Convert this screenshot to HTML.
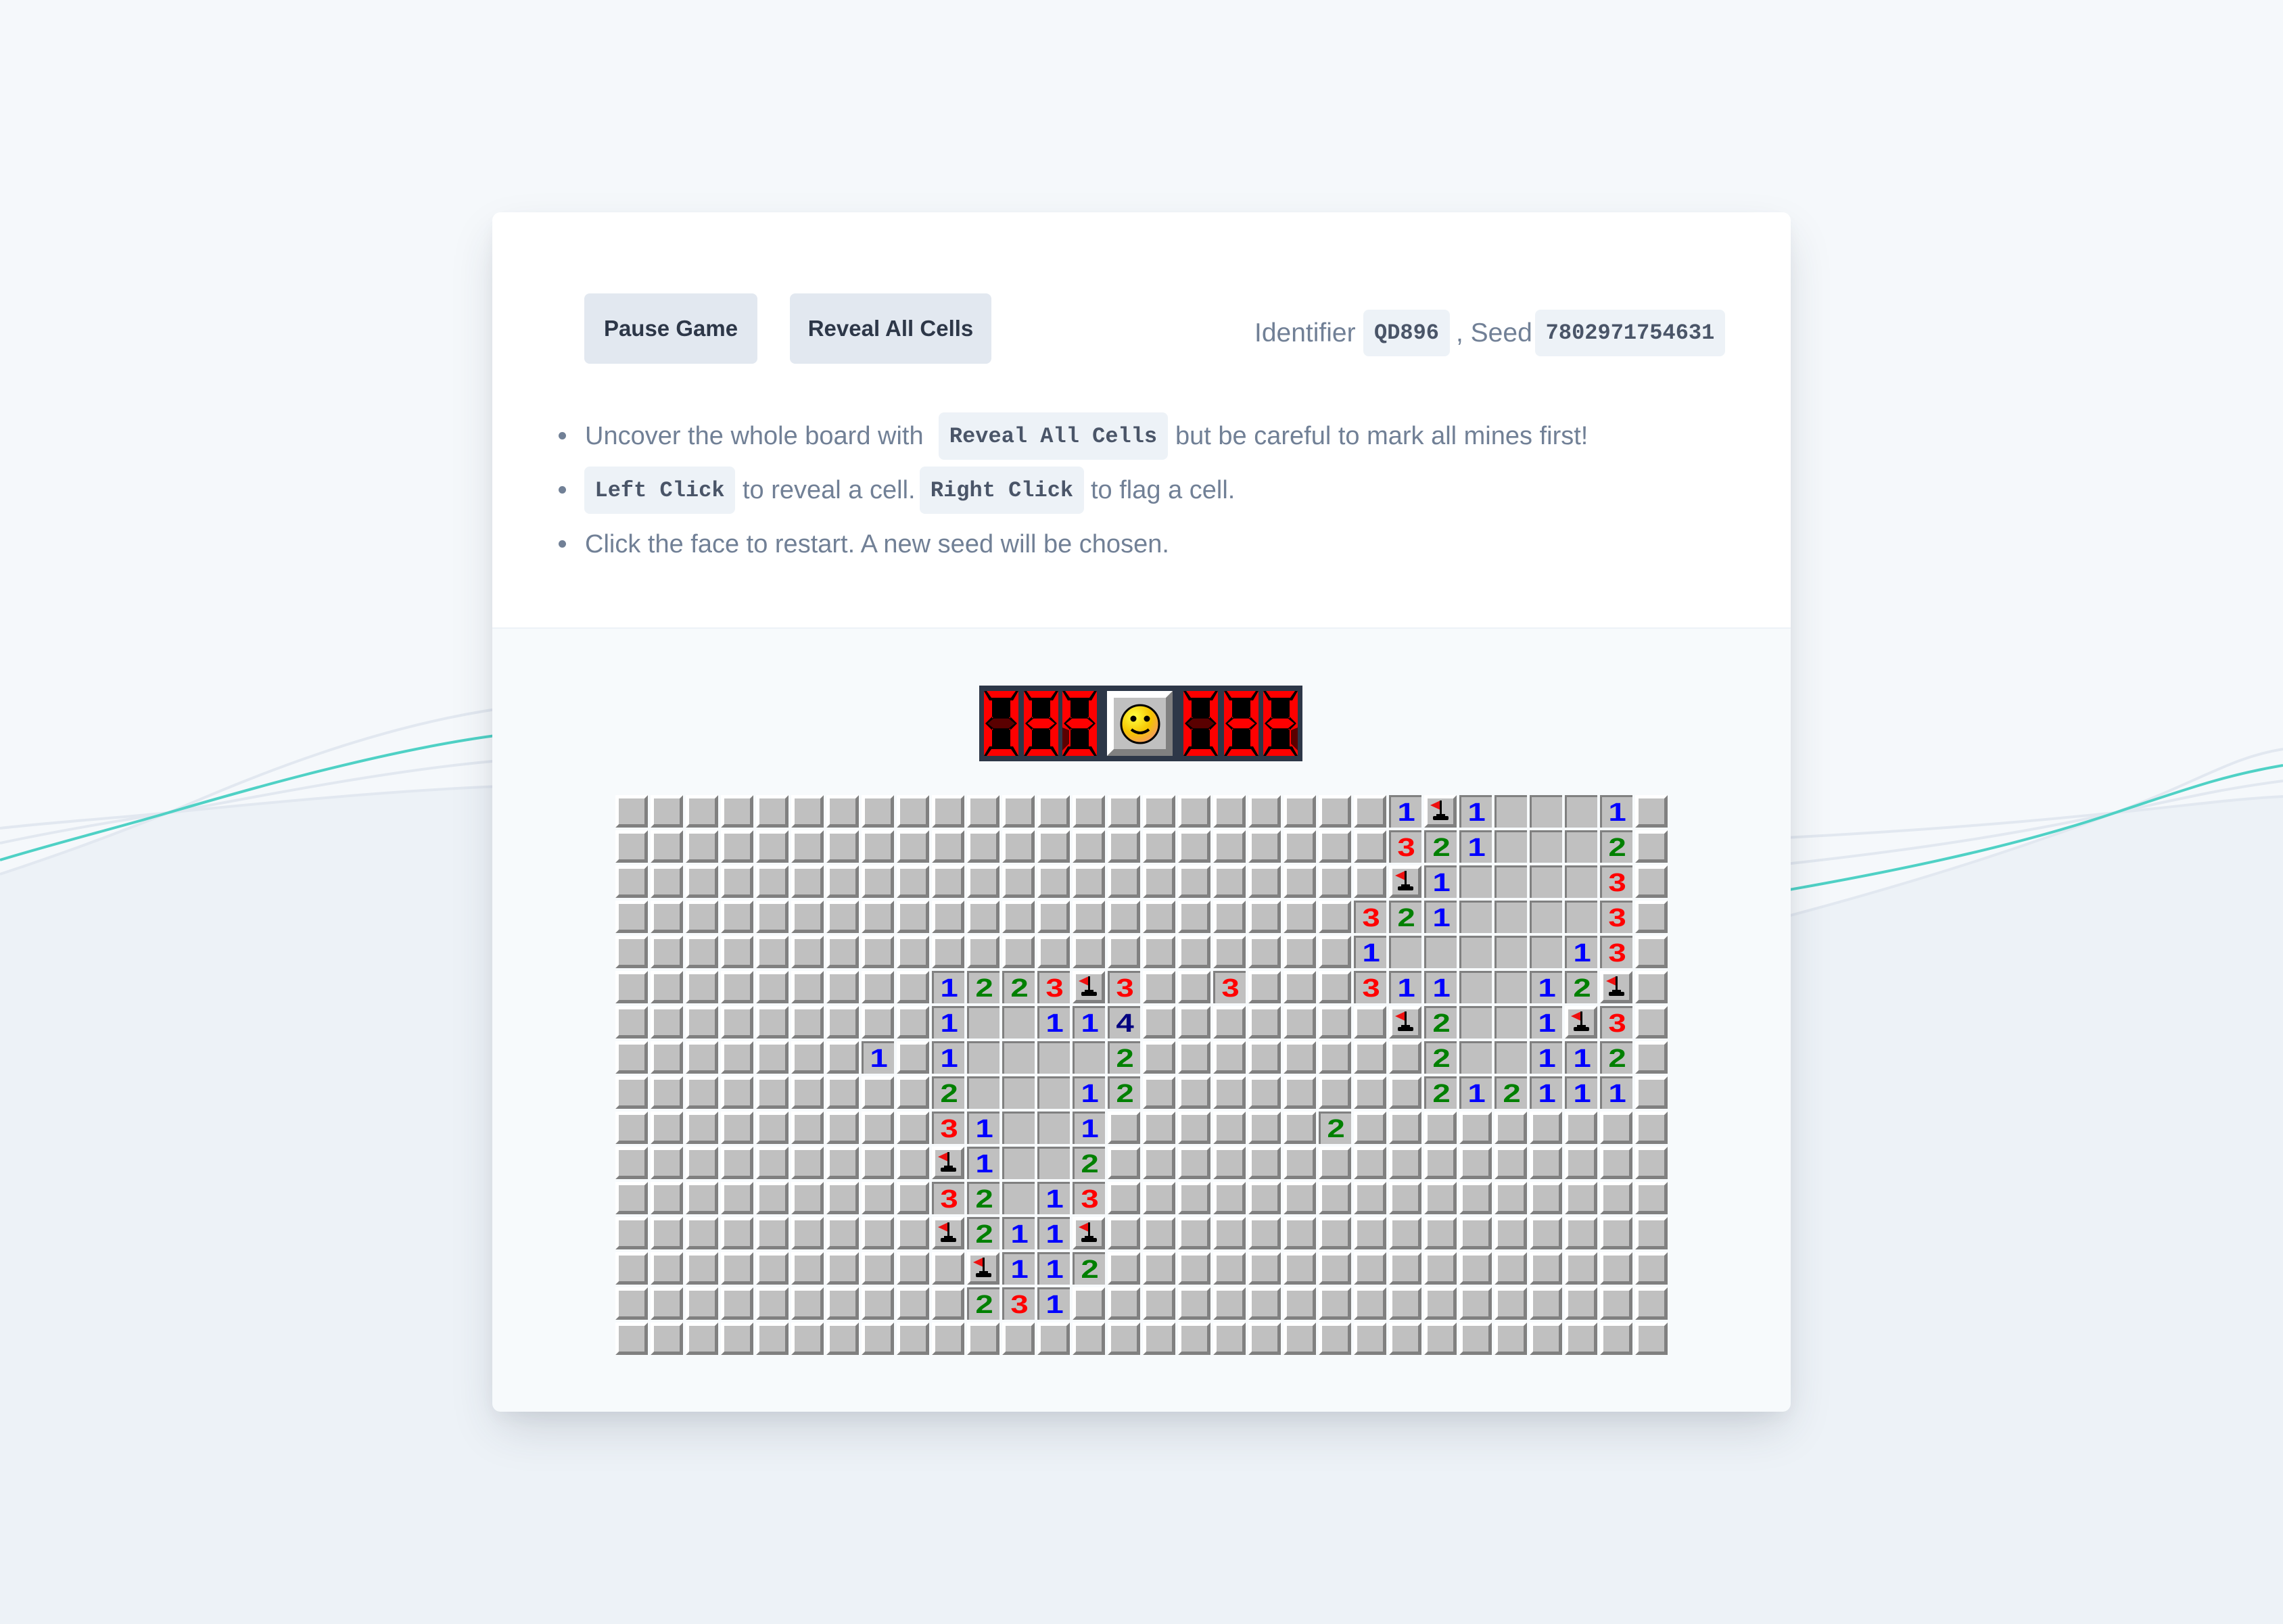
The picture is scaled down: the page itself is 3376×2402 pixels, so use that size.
<!DOCTYPE html>
<html><head><meta charset="utf-8"><style>
*{box-sizing:border-box}
body{margin:0;width:3376px;height:2402px;position:relative;overflow:hidden;background:#f5f8fb;font-family:"Liberation Sans",sans-serif}
#bg{position:absolute;left:0;top:0}
.card{position:absolute;left:728px;top:314px;width:1920px;height:1774px;background:#f7fafc;border-radius:12px;box-shadow:0 30px 70px -10px rgba(45,55,72,.18),0 10px 25px -5px rgba(45,55,72,.06);overflow:hidden}
.head{position:absolute;left:0;top:0;width:1920px;height:616px;background:#fff;border-bottom:2px solid #edf2f7}
.btn{position:absolute;top:120px;height:104px;background:#e2e8f0;border-radius:8px;color:#2d3748;font-weight:bold;font-size:33px;display:flex;align-items:center;justify-content:center}
.code{position:absolute;background:#edf2f7;border-radius:8px;font-family:"Liberation Mono",monospace;font-weight:bold;font-size:32px;color:#4a5568;display:flex;align-items:center;justify-content:center}
.t{position:absolute;color:#718096;font-size:38px;white-space:nowrap;line-height:1}
.dot{position:absolute;width:11px;height:11px;border-radius:50%;background:#718096}
#grid{position:absolute;left:910px;top:1176px;width:1560px;height:832px}
.r{position:absolute;width:48px;height:48px;background:#c0c0c0;border-top:3px solid #808080;border-left:3px solid #808080;text-align:center;font-weight:900;font-size:38px;line-height:46px}
.r span{display:inline-block;transform:scaleX(1.25)}
.n1{color:#0000ff}.n2{color:#008000}.n3{color:#ff0000}.n4{color:#000080}
</style></head><body>
<svg id="bg" width="3376" height="2402">
<rect x="730" y="1200" width="1916" height="1202" fill="#edf2f7"/>
<path d="M0,1293 C100,1260 180,1230 249,1202 C420,1185 600,1168 740,1163 L740,2402 L0,2402Z" fill="#edf2f7"/>
<path d="M0,1293 C100,1260 180,1230 249,1202 S520,1080 740,1048" fill="none" stroke="#e2e8f0" stroke-width="4"/>
<path d="M0,1247 C90,1228 170,1215 249,1202 S560,1140 740,1125" fill="none" stroke="#e2e8f0" stroke-width="4"/>
<path d="M0,1225 C90,1215 170,1210 249,1202 S560,1170 740,1163" fill="none" stroke="#e2e8f0" stroke-width="4"/>
<path d="M0,1272 C90,1245 170,1225 249,1202 S560,1110 740,1087" fill="none" stroke="#4fd1c5" stroke-width="4"/>
<path d="M2640,1356 C2850,1300 3000,1250 3128,1202 C3220,1192 3300,1182 3376,1178 L3376,2402 L2640,2402Z" fill="#edf2f7"/>
<path d="M2640,1356 C2850,1300 3000,1250 3128,1202 S3300,1120 3376,1108" fill="none" stroke="#e2e8f0" stroke-width="4"/>
<path d="M2640,1278 C2850,1255 3000,1230 3128,1202 S3300,1165 3376,1155" fill="none" stroke="#e2e8f0" stroke-width="4"/>
<path d="M2640,1239 C2850,1228 3000,1215 3128,1202 S3300,1182 3376,1178" fill="none" stroke="#e2e8f0" stroke-width="4"/>
<path d="M2640,1317 C2850,1280 3000,1245 3128,1202 S3300,1145 3376,1132" fill="none" stroke="#4fd1c5" stroke-width="4"/>
</svg>
<div class="card"><div class="head"></div></div>
<div class="btn" style="left:864px;top:434px;width:256px">Pause Game</div>
<div class="btn" style="left:1168px;top:434px;width:298px">Reveal All Cells</div>
<div class="t" style="left:1855px;top:473px;font-size:39px">Identifier</div>
<div class="code" style="left:2016px;top:458px;width:128px;height:69px">QD896</div>
<div class="t" style="left:2153px;top:473px;font-size:39px">, Seed</div>
<div class="code" style="left:2270px;top:458px;width:281px;height:69px">7802971754631</div>

<div class="dot" style="left:826px;top:639px"></div>
<div class="t" style="left:865px;top:626px">Uncover the whole board with</div>
<div class="code" style="left:1388px;top:610px;width:339px;height:70px">Reveal All Cells</div>
<div class="t" style="left:1738px;top:626px">but be careful to mark all mines first!</div>
<div class="dot" style="left:826px;top:719px"></div>
<div class="code" style="left:864px;top:690px;width:223px;height:70px">Left Click</div>
<div class="t" style="left:1098px;top:706px">to reveal a cell.</div>
<div class="code" style="left:1360px;top:690px;width:243px;height:70px">Right Click</div>
<div class="t" style="left:1613px;top:706px">to flag a cell.</div>
<div class="dot" style="left:826px;top:799px"></div>
<div class="t" style="left:865px;top:786px">Click the face to restart. A new seed will be chosen.</div>

<svg style="position:absolute;left:1448px;top:1014px" width="478" height="112">
<defs>
<g id="dg">
<rect width="51" height="96" fill="#ff0000"/>
<polygon points="0,0 8,14 43,14 51,0 47,0 40,10 11,10 4,0" fill="#000"/>
<polygon points="0,96 8,82 43,82 51,96 47,96 40,86 11,86 4,96" fill="#000"/>
<polygon points="12,14 39,14 39,38 33,42 18,42 12,38" fill="#000"/>
<polygon points="12,82 39,82 39,58 33,54 18,54 12,58" fill="#000"/>
<polygon points="2,48 12,38 12,58" fill="#000"/><polygon points="49,48 39,38 39,58" fill="#000"/>
<polygon points="4,48 14,40 37,40 47,48 37,56 14,56" fill="#ff0000" stroke="#000" stroke-width="1.5"/>
</g>
</defs>
<rect width="478" height="112" fill="#2d3748"/>
<use href="#dg" x="7" y="8"/><use href="#dg" x="66" y="8"/><use href="#dg" x="123" y="8"/>
<use href="#dg" x="302" y="8"/><use href="#dg" x="362" y="8"/><use href="#dg" x="420" y="8"/>
<polygon points="11,56 21,48 44,48 54,56 44,64 21,64" fill="#5a0000" stroke="#000" stroke-width="1.5"/>
<polygon points="306,56 316,48 339,48 349,56 339,64 316,64" fill="#5a0000" stroke="#000" stroke-width="1.5"/>
<polygon points="123,62 133,66 133,86 123,96" fill="#5a0000"/>
<polygon points="471,62 461,66 461,86 471,96" fill="#5a0000"/>
<g transform="translate(189,8)">
<rect width="97" height="96" fill="#808080"/>
<polygon points="0,0 97,0 87,10 10,10 10,86 0,96" fill="#fff"/>
<rect x="10" y="10" width="77" height="76" fill="#c0c0c0"/>
<defs><radialGradient id="fg" cx="35%" cy="30%" r="75%"><stop offset="0" stop-color="#ffff40"/><stop offset=".6" stop-color="#f5c400"/><stop offset="1" stop-color="#f59a60"/></radialGradient></defs>
<ellipse cx="49" cy="49" rx="28" ry="28" fill="url(#fg)" stroke="#000" stroke-width="3"/>
<circle cx="39" cy="41" r="4.5"/><circle cx="59" cy="41" r="4.5"/>
<path d="M36,57 Q49,67 62,57" fill="none" stroke="#000" stroke-width="4"/>
</g>
</svg>

<svg style="position:absolute;left:910px;top:1176px" width="1560" height="832">
<defs><pattern id="cp" width="52" height="52" patternUnits="userSpaceOnUse">
<polygon points="48,0 48,48 0,48" fill="#808080"/>
<polygon points="0,0 48,0 0,48" fill="#fff"/>
<rect x="5" y="5" width="38" height="38" fill="#c0c0c0"/>
</pattern>
<g id="fl"><polygon points="24,8 24,22 9,15" fill="#ee1010"/><rect x="23" y="8" width="3" height="24" fill="#000"/><rect x="18" y="28" width="13" height="4" fill="#000"/><rect x="13" y="31" width="23" height="6" rx="2" fill="#000"/></g>
</defs>
<rect width="1560" height="832" fill="url(#cp)"/>
<use href="#fl" x="1196" y="0"/><use href="#fl" x="1144" y="104"/>
<use href="#fl" x="676" y="260"/><use href="#fl" x="1456" y="260"/>
<use href="#fl" x="1144" y="312"/><use href="#fl" x="1404" y="312"/>
<use href="#fl" x="468" y="520"/><use href="#fl" x="468" y="624"/><use href="#fl" x="676" y="624"/><use href="#fl" x="520" y="676"/>
</svg>

<div id="grid">
<div class="r n1" style="left:1144px;top:0"><span>1</span></div>
<div class="r n1" style="left:1248px;top:0"><span>1</span></div>
<div class="r" style="left:1300px;top:0"></div><div class="r" style="left:1352px;top:0"></div><div class="r" style="left:1404px;top:0"></div>
<div class="r n1" style="left:1456px;top:0"><span>1</span></div>
<div class="r n3" style="left:1144px;top:52px"><span>3</span></div>
<div class="r n2" style="left:1196px;top:52px"><span>2</span></div>
<div class="r n1" style="left:1248px;top:52px"><span>1</span></div>
<div class="r" style="left:1300px;top:52px"></div><div class="r" style="left:1352px;top:52px"></div><div class="r" style="left:1404px;top:52px"></div>
<div class="r n2" style="left:1456px;top:52px"><span>2</span></div>
<div class="r n1" style="left:1196px;top:104px"><span>1</span></div>
<div class="r" style="left:1248px;top:104px"></div><div class="r" style="left:1300px;top:104px"></div><div class="r" style="left:1352px;top:104px"></div><div class="r" style="left:1404px;top:104px"></div>
<div class="r n3" style="left:1456px;top:104px"><span>3</span></div>
<div class="r n3" style="left:1092px;top:156px"><span>3</span></div>
<div class="r n2" style="left:1144px;top:156px"><span>2</span></div>
<div class="r n1" style="left:1196px;top:156px"><span>1</span></div>
<div class="r" style="left:1248px;top:156px"></div><div class="r" style="left:1300px;top:156px"></div><div class="r" style="left:1352px;top:156px"></div><div class="r" style="left:1404px;top:156px"></div>
<div class="r n3" style="left:1456px;top:156px"><span>3</span></div>
<div class="r n1" style="left:1092px;top:208px"><span>1</span></div>
<div class="r" style="left:1144px;top:208px"></div><div class="r" style="left:1196px;top:208px"></div><div class="r" style="left:1248px;top:208px"></div><div class="r" style="left:1300px;top:208px"></div><div class="r" style="left:1352px;top:208px"></div>
<div class="r n1" style="left:1404px;top:208px"><span>1</span></div>
<div class="r n3" style="left:1456px;top:208px"><span>3</span></div>
<div class="r n1" style="left:468px;top:260px"><span>1</span></div>
<div class="r n2" style="left:520px;top:260px"><span>2</span></div>
<div class="r n2" style="left:572px;top:260px"><span>2</span></div>
<div class="r n3" style="left:624px;top:260px"><span>3</span></div>
<div class="r n3" style="left:728px;top:260px"><span>3</span></div>
<div class="r n3" style="left:884px;top:260px"><span>3</span></div>
<div class="r n3" style="left:1092px;top:260px"><span>3</span></div>
<div class="r n1" style="left:1144px;top:260px"><span>1</span></div>
<div class="r n1" style="left:1196px;top:260px"><span>1</span></div>
<div class="r" style="left:1248px;top:260px"></div><div class="r" style="left:1300px;top:260px"></div>
<div class="r n1" style="left:1352px;top:260px"><span>1</span></div>
<div class="r n2" style="left:1404px;top:260px"><span>2</span></div>
<div class="r n1" style="left:468px;top:312px"><span>1</span></div>
<div class="r" style="left:520px;top:312px"></div><div class="r" style="left:572px;top:312px"></div>
<div class="r n1" style="left:624px;top:312px"><span>1</span></div>
<div class="r n1" style="left:676px;top:312px"><span>1</span></div>
<div class="r n4" style="left:728px;top:312px"><span>4</span></div>
<div class="r n2" style="left:1196px;top:312px"><span>2</span></div>
<div class="r" style="left:1248px;top:312px"></div><div class="r" style="left:1300px;top:312px"></div>
<div class="r n1" style="left:1352px;top:312px"><span>1</span></div>
<div class="r n3" style="left:1456px;top:312px"><span>3</span></div>
<div class="r n1" style="left:364px;top:364px"><span>1</span></div>
<div class="r n1" style="left:468px;top:364px"><span>1</span></div>
<div class="r" style="left:520px;top:364px"></div><div class="r" style="left:572px;top:364px"></div><div class="r" style="left:624px;top:364px"></div><div class="r" style="left:676px;top:364px"></div>
<div class="r n2" style="left:728px;top:364px"><span>2</span></div>
<div class="r n2" style="left:1196px;top:364px"><span>2</span></div>
<div class="r" style="left:1248px;top:364px"></div><div class="r" style="left:1300px;top:364px"></div>
<div class="r n1" style="left:1352px;top:364px"><span>1</span></div>
<div class="r n1" style="left:1404px;top:364px"><span>1</span></div>
<div class="r n2" style="left:1456px;top:364px"><span>2</span></div>
<div class="r n2" style="left:468px;top:416px"><span>2</span></div>
<div class="r" style="left:520px;top:416px"></div><div class="r" style="left:572px;top:416px"></div><div class="r" style="left:624px;top:416px"></div>
<div class="r n1" style="left:676px;top:416px"><span>1</span></div>
<div class="r n2" style="left:728px;top:416px"><span>2</span></div>
<div class="r n2" style="left:1196px;top:416px"><span>2</span></div>
<div class="r n1" style="left:1248px;top:416px"><span>1</span></div>
<div class="r n2" style="left:1300px;top:416px"><span>2</span></div>
<div class="r n1" style="left:1352px;top:416px"><span>1</span></div>
<div class="r n1" style="left:1404px;top:416px"><span>1</span></div>
<div class="r n1" style="left:1456px;top:416px"><span>1</span></div>
<div class="r n3" style="left:468px;top:468px"><span>3</span></div>
<div class="r n1" style="left:520px;top:468px"><span>1</span></div>
<div class="r" style="left:572px;top:468px"></div><div class="r" style="left:624px;top:468px"></div>
<div class="r n1" style="left:676px;top:468px"><span>1</span></div>
<div class="r n2" style="left:1040px;top:468px"><span>2</span></div>
<div class="r n1" style="left:520px;top:520px"><span>1</span></div>
<div class="r" style="left:572px;top:520px"></div><div class="r" style="left:624px;top:520px"></div>
<div class="r n2" style="left:676px;top:520px"><span>2</span></div>
<div class="r n3" style="left:468px;top:572px"><span>3</span></div>
<div class="r n2" style="left:520px;top:572px"><span>2</span></div>
<div class="r" style="left:572px;top:572px"></div>
<div class="r n1" style="left:624px;top:572px"><span>1</span></div>
<div class="r n3" style="left:676px;top:572px"><span>3</span></div>
<div class="r n2" style="left:520px;top:624px"><span>2</span></div>
<div class="r n1" style="left:572px;top:624px"><span>1</span></div>
<div class="r n1" style="left:624px;top:624px"><span>1</span></div>
<div class="r n1" style="left:572px;top:676px"><span>1</span></div>
<div class="r n1" style="left:624px;top:676px"><span>1</span></div>
<div class="r n2" style="left:676px;top:676px"><span>2</span></div>
<div class="r n2" style="left:520px;top:728px"><span>2</span></div>
<div class="r n3" style="left:572px;top:728px"><span>3</span></div>
<div class="r n1" style="left:624px;top:728px"><span>1</span></div>
</div>
</body></html>
